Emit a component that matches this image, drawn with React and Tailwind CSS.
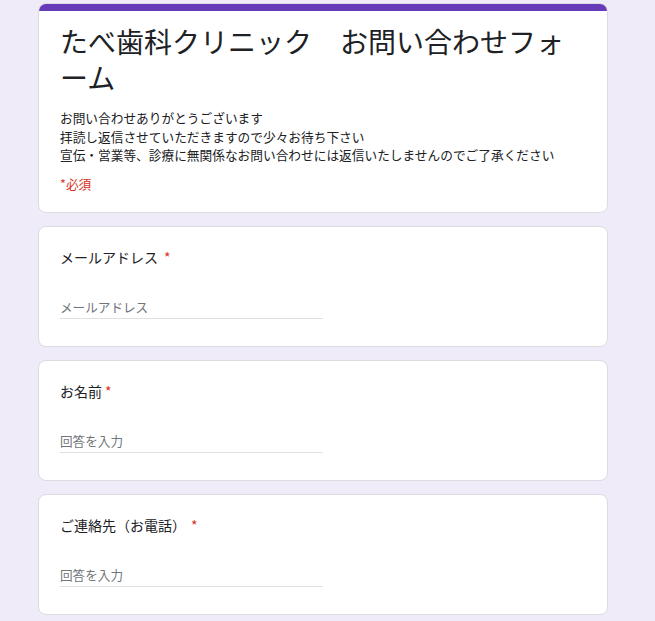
import React from "react";

const font = { fontFamily: '"Noto Sans CJK JP", "Noto Sans", Roboto, sans-serif' };

function Question({ label, placeholder, gap }) {
  return (
    <div className="h-[121px] rounded-lg border border-[#dadce0] bg-white px-[21px] pt-[20px]">
      <div className="flex items-center text-[14px] leading-[20px] text-[#202124]">
        <span>{label}</span>
        <span className={`${gap} text-[#d93025]`}>*</span>
      </div>
      <div className="mt-[30px] w-1/2 border-b border-[#e0e0e0] pb-[1px] text-[12.6px] leading-[20px] text-[#70757a]">
        {placeholder}
      </div>
    </div>
  );
}

export default function App() {
  return (
    <div className="min-h-[621px] bg-[#f0ebf8] pt-[3px]" style={font}>
      <div className="ml-[38px] flex w-[570px] flex-col gap-[13px]">
        <div className="h-[210px] overflow-hidden rounded-lg border border-[#dadce0] bg-white">
          <div className="-mx-px -mt-px h-[8px] bg-[#673ab7]" />
          <div className="px-[21px] pt-[12px]">
            <h1 className="text-[28px] font-normal leading-[36px] text-[#202124]">
              たべ歯科クリニック　お問い合わせフォーム
            </h1>
            <div className="mt-[14px] text-[12.7px] leading-[18.5px] text-[#202124]">
              <p>お問い合わせありがとうございます</p>
              <p>拝読し返信させていただきますので少々お待ち下さい</p>
              <p>宣伝・営業等、診療に無関係なお問い合わせには返信いたしませんのでご了承ください</p>
            </div>
            <p className="mt-[10px] text-[12.7px] leading-[18px] text-[#d93025]">*必須</p>
          </div>
        </div>
        <Question label="メールアドレス" placeholder="メールアドレス" gap="ml-[6px]" />
        <Question label="お名前" placeholder="回答を入力" gap="ml-[3px]" />
        <Question label="ご連絡先（お電話）" placeholder="回答を入力" gap="ml-[5px]" />
      </div>
    </div>
  );
}
